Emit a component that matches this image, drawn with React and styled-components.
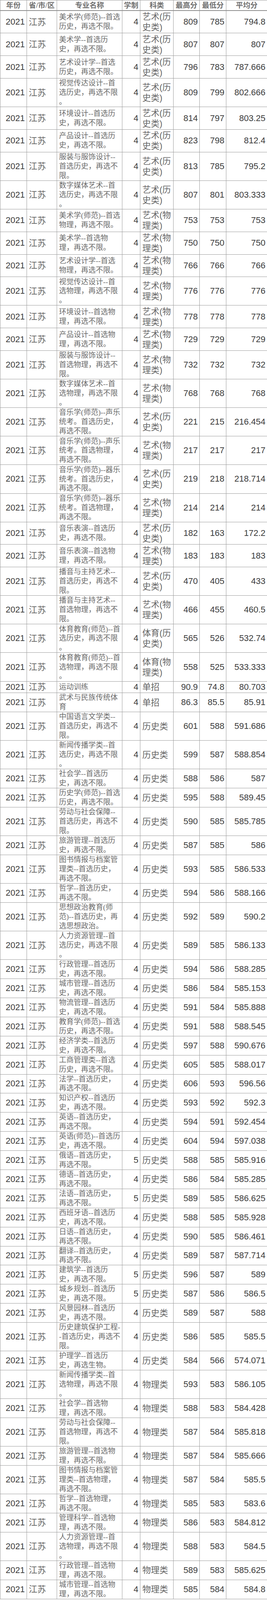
import React from "react";
import styled, { createGlobalStyle } from "styled-components";

const GlobalStyle = createGlobalStyle`
    body {
        margin: 0;
        background: #fff;
    }
`;

const Sheet = styled.table`
    width: 683px;
    border-collapse: collapse;
    table-layout: fixed;
    background: #fff;
`;

const HeadCell = styled.th`
    padding: 0;
    height: 25.2px;
    border: 1px solid #9c9c9c;
    border-bottom: 2px solid #8e8e8e;
    font: 700 18.5px/24px "Liberation Serif", "Noto Sans CJK SC", serif;
    color: #707070;
    text-align: center;
    white-space: nowrap;
`;

const Row = styled.tr`
    height: ${(p) => p.$height}px;
`;

const Cell = styled.td`
    padding: 0 ${(p) => (p.$align === "right" ? "4px" : "0")} 0 ${(p) => (p.$align === "right" ? "0" : "5px")};
    border: 1px solid #9c9c9c;
    vertical-align: middle;
    text-align: ${(p) => p.$align || "left"};
    white-space: nowrap;
    overflow: hidden;
`;

// numbers: year, 学制, scores
const NumCell = styled(Cell)`
    font: 22px/26px "Liberation Sans", Arial, sans-serif;
    color: #3c3c3c;
`;

// 江苏 and 科类
const WordCell = styled(Cell)`
    font: 22px/27px "Liberation Sans", "Noto Sans CJK SC", sans-serif;
    color: #666;
`;

const MajorCell = styled(Cell)`
    font: 18.8px/23.9px "Liberation Serif", "Noto Sans CJK SC", serif;
    color: #6a6a6a;
`;

const Line = styled.span`
    display: block;
`;

const AH = "艺术(历|史类)";
const AP = "艺术(物|理类)";
const H = "历史类";
const P = "物理类";

const rows = [
    ["美术学(师范)--首选|历史，再选不限。", 4, AH, "809", "785", "794.8"],
    ["美术学--首选历|史，再选不限。", 4, AH, "807", "807", "807"],
    ["艺术设计学--首选|历史，再选不限。", 4, AH, "796", "783", "787.666"],
    ["视觉传达设计--首|选历史，再选不限|。", 4, AH, "809", "799", "802.666"],
    ["环境设计--首选历|史，再选不限。", 4, AH, "814", "797", "803.25"],
    ["产品设计--首选历|史，再选不限。", 4, AH, "823", "798", "812.4"],
    ["服装与服饰设计--|首选历史，再选不|限。", 4, AH, "813", "785", "795.2"],
    ["数字媒体艺术--首|选历史，再选不限|。", 4, AH, "807", "801", "803.333"],
    ["美术学(师范)--首选|物理，再选不限。", 4, AP, "753", "753", "753"],
    ["美术学--首选物|理，再选不限。", 4, AP, "750", "750", "750"],
    ["艺术设计学--首选|物理，再选不限。", 4, AP, "766", "766", "766"],
    ["视觉传达设计--首|选物理，再选不限|。", 4, AP, "776", "776", "776"],
    ["环境设计--首选物|理，再选不限。", 4, AP, "778", "778", "778"],
    ["产品设计--首选物|理，再选不限。", 4, AP, "729", "729", "729"],
    ["服装与服饰设计--|首选物理，再选不|限。", 4, AP, "732", "732", "732"],
    ["数字媒体艺术--首|选物理，再选不限|。", 4, AP, "768", "768", "768"],
    ["音乐学(师范)--声乐|统考。首选历史，|再选不限。", 4, AH, "221", "215", "216.454"],
    ["音乐学(师范)--声乐|统考。首选物理，|再选不限。", 4, AP, "217", "217", "217"],
    ["音乐学(师范)--器乐|统考。首选历史，|再选不限。", 4, AH, "219", "218", "218.714"],
    ["音乐学(师范)--器乐|统考。首选物理，|再选不限。", 4, AP, "214", "214", "214"],
    ["音乐表演--首选历|史，再选不限。", 4, AH, "182", "163", "172.2"],
    ["音乐表演--首选物|理，再选不限。", 4, AP, "183", "183", "183"],
    ["播音与主持艺术--|首选历史，再选不|限。", 4, AH, "470", "405", "433"],
    ["播音与主持艺术--|首选物理，再选不|限。", 4, AP, "466", "455", "460.5"],
    ["体育教育(师范)--首|选历史，再选不限|。", 4, "体育(历|史类)", "565", "526", "532.74"],
    ["体育教育(师范)--首|选物理，再选不限|。", 4, "体育(物|理类)", "558", "525", "533.333"],
    ["运动训练", 4, "单招", "90.9", "74.8", "80.703"],
    ["武术与民族传统体|育", 4, "单招", "86.3", "85.5", "85.91"],
    ["中国语言文学类--|首选历史，再选不|限。", 4, H, "601", "588", "591.686"],
    ["新闻传播学类--首|选历史，再选不限|。", 4, H, "599", "587", "588.854"],
    ["社会学--首选历|史，再选不限。", 4, H, "588", "586", "587"],
    ["历史学(师范)--首选|历史，再选不限。", 4, H, "595", "588", "589.45"],
    ["劳动与社会保障--|首选历史，再选不|限。", 4, H, "590", "585", "585.785"],
    ["旅游管理--首选历|史，再选不限。", 4, H, "587", "585", "586"],
    ["图书情报与档案管|理类--首选历史，|再选不限。", 4, H, "593", "585", "586.533"],
    ["哲学--首选历史，|再选不限。", 4, H, "594", "586", "588.166"],
    ["思想政治教育(师|范)--首选历史，再|选思想政治。", 4, H, "592", "589", "590.2"],
    ["人力资源管理--首|选历史，再选不限|。", 4, H, "589", "585", "586.133"],
    ["行政管理--首选历|史，再选不限。", 4, H, "594", "586", "588.285"],
    ["城市管理--首选历|史，再选不限。", 4, H, "586", "584", "585.153"],
    ["物流管理--首选历|史，再选不限。", 4, H, "591", "584", "585.888"],
    ["教育学(师范)--首选|历史，再选不限。", 4, H, "591", "588", "588.545"],
    ["经济学类--首选历|史，再选不限。", 4, H, "597", "588", "590.676"],
    ["工商管理类--首选|历史，再选不限。", 4, H, "605", "585", "588.017"],
    ["法学--首选历史，|再选不限。", 4, H, "606", "593", "596.56"],
    ["知识产权--首选历|史，再选不限。", 4, H, "593", "592", "592.3"],
    ["英语--首选历史，|再选不限。", 4, H, "594", "591", "592.454"],
    ["英语(师范)--首选历|史，再选不限。", 4, H, "604", "594", "597.038"],
    ["俄语--首选历史，|再选不限。", 5, H, "588", "585", "585.916"],
    ["德语--首选历史，|再选不限。", 4, H, "586", "584", "585.285"],
    ["法语--首选历史，|再选不限。", 5, H, "589", "585", "586.625"],
    ["西班牙语--首选历|史，再选不限。", 4, H, "588", "585", "585.928"],
    ["日语--首选历史，|再选不限。", 4, H, "590", "585", "586.461"],
    ["翻译--首选历史，|再选不限。", 4, H, "589", "587", "587.714"],
    ["建筑学--首选历|史，再选不限。", 5, H, "596", "587", "589"],
    ["城乡规划--首选历|史，再选不限。", 5, H, "587", "586", "586.5"],
    ["风景园林--首选历|史，再选不限。", 4, H, "589", "587", "588"],
    ["历史建筑保护工程-|-首选历史，再选不|限。", 4, H, "586", "585", "585.5"],
    ["护理学--首选历|史，再选生物。", 4, H, "584", "566", "574.071"],
    ["新闻传播学类--首|选物理，再选不限|。", 4, P, "593", "583", "586.105"],
    ["社会学--首选物|理，再选不限。", 4, P, "588", "583", "584.428"],
    ["劳动与社会保障--|首选物理，再选不|限。", 4, P, "587", "584", "585.818"],
    ["旅游管理--首选物|理，再选不限。", 4, P, "587", "584", "585.666"],
    ["图书情报与档案管|理类--首选物理，|再选不限。", 4, P, "587", "584", "585.5"],
    ["哲学--首选物理，|再选不限。", 4, P, "585", "583", "583.6"],
    ["管理科学--首选物|理，再选不限。", 4, P, "586", "583", "584.812"],
    ["人力资源管理--首|选物理，再选不限|。", 4, P, "588", "583", "584.5"],
    ["行政管理--首选物|理，再选不限。", 4, P, "589", "583", "585.625"],
    ["城市管理--首选物|理，再选不限。", 4, P, "585", "584", "584.8"],
];

const columns = [
    ["年份", 67.5],
    ["省/市/区", 77.5],
    ["专业名称", 167],
    ["学制", 46],
    ["科类", 85],
    ["最高分", 67],
    ["最低分", 68],
    ["平均分", 105],
];

// row height follows the number of wrapped lines in 专业名称 and 科类
const rowHeight = (major, kind) => {
    const majorLines = major.split("|").length;
    const kindLines = kind.split("|").length;
    if (majorLines >= 3) return 73.1;
    if (kindLines === 2) return 57.8;
    if (majorLines === 2) return 48.9;
    return 29.6;
};

const Lines = ({ text }) => text.split("|").map((line, i) => <Line key={i}>{line}</Line>);

const App = () => {
    return (
        <>
            <GlobalStyle />
            <Sheet>
                <colgroup>
                    {columns.map(([name, width]) => (
                        <col key={name} style={{ width }} />
                    ))}
                </colgroup>
                <thead>
                    <tr>
                        {columns.map(([name]) => (
                            <HeadCell key={name}>{name}</HeadCell>
                        ))}
                    </tr>
                </thead>
                <tbody>
                    {rows.map(([major, years, kind, max, min, avg], i) => (
                        <Row key={i} $height={rowHeight(major, kind)}>
                            <NumCell $align="right">2021</NumCell>
                            <WordCell>江苏</WordCell>
                            <MajorCell>
                                <Lines text={major} />
                            </MajorCell>
                            <NumCell $align="right">{years}</NumCell>
                            <WordCell>
                                <Lines text={kind} />
                            </WordCell>
                            <NumCell $align="right">{max}</NumCell>
                            <NumCell $align="right">{min}</NumCell>
                            <NumCell $align="right">{avg}</NumCell>
                        </Row>
                    ))}
                </tbody>
            </Sheet>
        </>
    );
};

export default App;
